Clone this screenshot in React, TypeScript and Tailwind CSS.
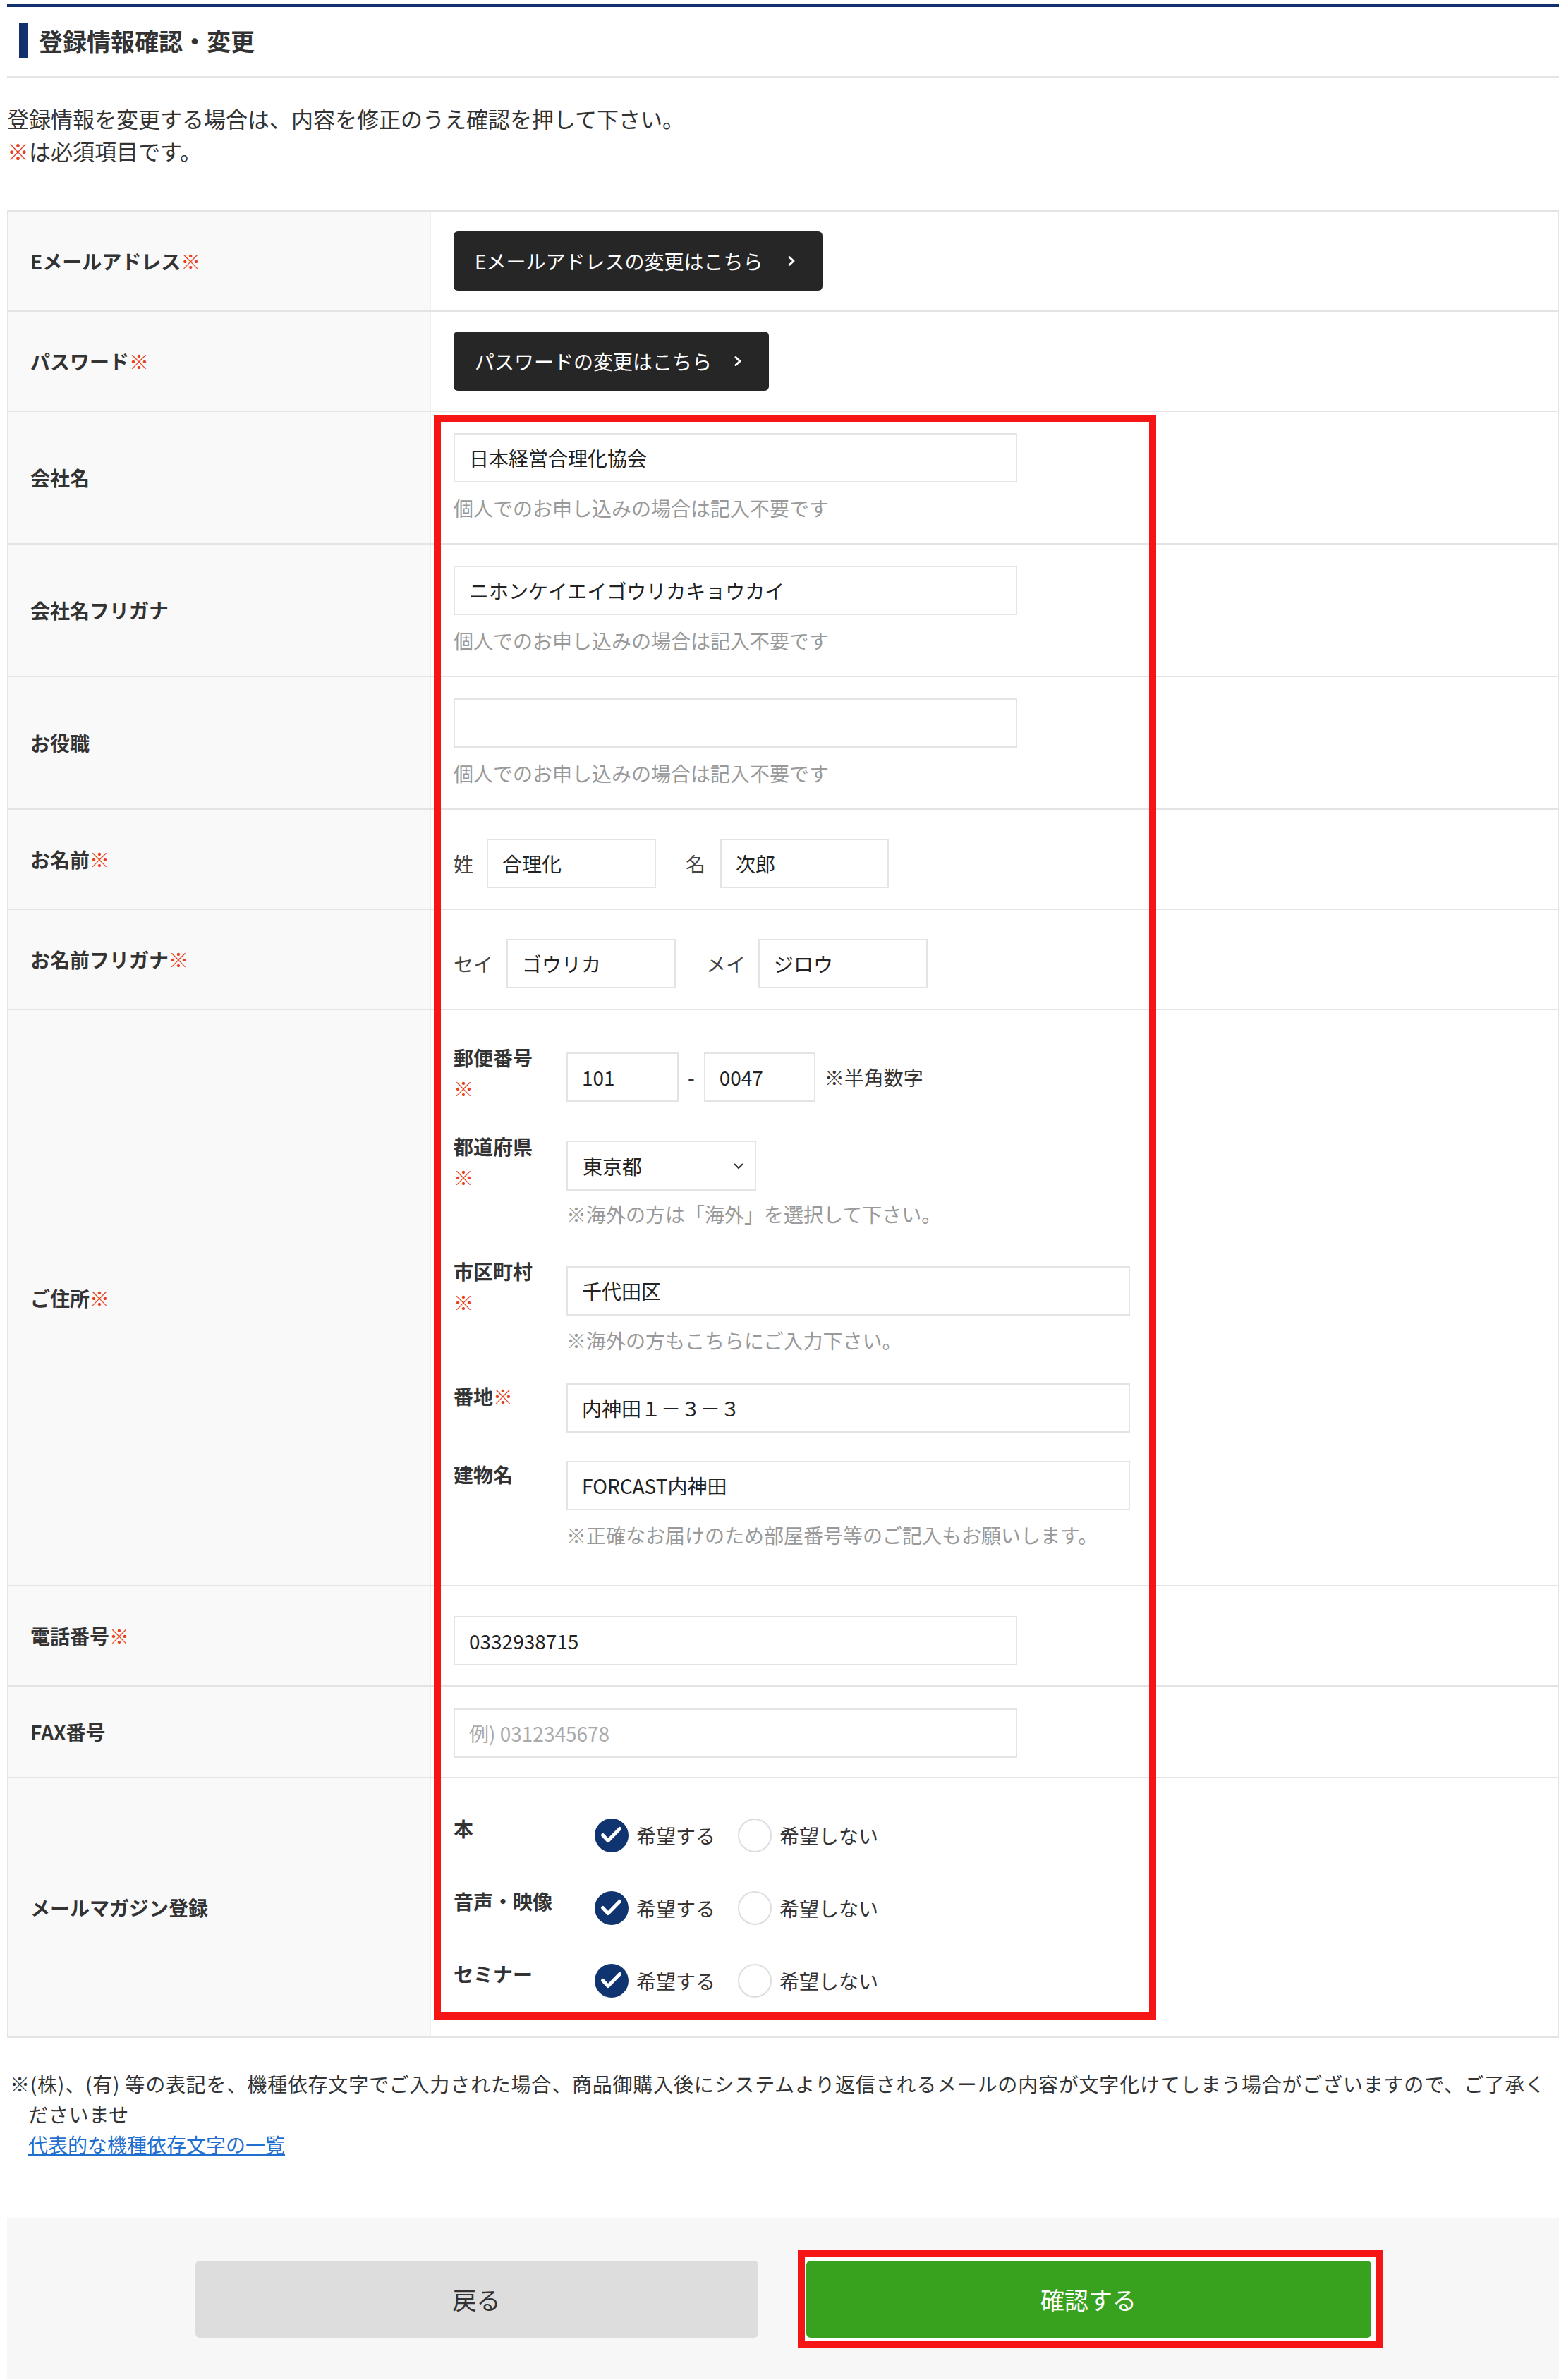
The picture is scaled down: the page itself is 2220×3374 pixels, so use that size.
import type { FC, ReactNode } from 'react'

const Req: FC = () => <span className="font-normal text-[#e8401c]">※</span>

interface RowProps {
  label: ReactNode
  cell: string
  children: ReactNode
}

const Row: FC<RowProps> = ({ label, cell, children }) => (
  <div className="grid grid-cols-[599px_1fr] border-b-2 border-[#e4e4e4]">
    <div className="flex items-center border-r-2 border-[#efefef] bg-[#f9f9f9] pl-[31px] text-[28px] font-bold text-[#333]">
      {label}
    </div>
    <div className={cell}>{children}</div>
  </div>
)

const TextBox: FC<{ value?: string; placeholder?: string; w: string }> = ({ value, placeholder, w }) => (
  <input
    readOnly
    value={value ?? ''}
    placeholder={placeholder}
    className={`${w} h-[70px] border-2 border-[#e4e4e4] bg-white px-[20px] text-[28px] text-[#222] outline-none placeholder:text-[#aaa]`}
  />
)

const Hint: FC<{ children: ReactNode; mt: string }> = ({ children, mt }) => (
  <div className={`${mt} text-[28px] leading-[44px] text-[#999]`}>{children}</div>
)

const DarkButton: FC<{ children: ReactNode; w: string }> = ({ children, w }) => (
  <button className={`${w} flex h-[84px] items-center justify-between rounded-[6px] bg-[#262626] pl-[30px] pr-[38px] text-[28px] text-white`}>
    <span>{children}</span>
    <svg width="12" height="16" viewBox="0 0 12 16">
      <path d="M3 2.5l6 5.5-6 5.5" fill="none" stroke="#fff" strokeWidth="3" strokeLinecap="round" strokeLinejoin="round" />
    </svg>
  </button>
)

const Radio: FC<{ checked?: boolean; label: string; ml?: string }> = ({ checked, label, ml = '' }) => (
  <div className={`${ml} flex items-center gap-[11px]`}>
    {checked ? (
      <svg width="48" height="48" viewBox="0 0 48 48">
        <circle cx="24" cy="24" r="24" fill="#0f3470" />
        <path d="M11.5 23.5l7.5 8L35.5 14.5" fill="none" stroke="#fff" strokeWidth="5" strokeLinecap="round" strokeLinejoin="round" />
      </svg>
    ) : (
      <span className="h-[48px] w-[48px] rounded-full border-2 border-[#dddddd] bg-white" />
    )}
    <span className="text-[28px] leading-none text-[#333]">{label}</span>
  </div>
)

const SubLabel: FC<{ children: ReactNode }> = ({ children }) => (
  <div className="w-[160px] shrink-0 text-[28px] font-bold leading-[44px] text-[#333]">{children}</div>
)

const MagRow: FC<{ label: string; mt?: string }> = ({ label, mt = '' }) => (
  <div className={`${mt} flex items-start`}>
    <div className="w-[200px] shrink-0 text-[28px] font-bold leading-[44px] text-[#333]">{label}</div>
    <div className="mt-[8px] flex items-center">
      <Radio checked label="希望する" />
      <Radio label="希望しない" ml="ml-[32px]" />
    </div>
  </div>
)

const App: FC = () => {
  return (
    <div className="min-h-[3374px] w-[2220px] bg-white px-[10px] font-['Noto_Sans_CJK_JP','Noto_Sans',sans-serif] text-[#333]">
      {/* top rule */}
      <div className="mt-[5px] h-[5px] bg-[#10316b]" />

      {/* heading */}
      <div className="mt-[22px] flex h-[50px] items-center">
        <div className="ml-[17px] h-[50px] w-[12px] bg-[#10316b]" />
        <h1 className="ml-[16px] text-[34px] font-bold text-[#333]">登録情報確認・変更</h1>
      </div>
      <div className="mt-[26px] border-t-2 border-[#e5e5e5]" />

      <div className="mt-[35px] text-[31px] leading-[46px] text-[#333]">
        <p>登録情報を変更する場合は、内容を修正のうえ確認を押して下さい。</p>
        <p>
          <Req />は必須項目です。
        </p>
      </div>

      {/* form table */}
      <div className="relative mt-[61px]">
        <div className="border-x-2 border-t-2 border-[#e4e4e4]">
          <Row label={<>Eメールアドレス<Req /></>} cell="pl-[32px] py-[28px]">
            <DarkButton w="w-[523px]">Eメールアドレスの変更はこちら</DarkButton>
          </Row>

          <Row label={<>パスワード<Req /></>} cell="pl-[32px] py-[28px]">
            <DarkButton w="w-[447px]">パスワードの変更はこちら</DarkButton>
          </Row>

          <Row label="会社名" cell="pl-[32px] pt-[30px] pb-[28px]">
            <TextBox w="w-[799px]" value="日本経営合理化協会" />
            <Hint mt="mt-[14px]">個人でのお申し込みの場合は記入不要です</Hint>
          </Row>

          <Row label="会社名フリガナ" cell="pl-[32px] pt-[30px] pb-[28px]">
            <TextBox w="w-[799px]" value="ニホンケイエイゴウリカキョウカイ" />
            <Hint mt="mt-[14px]">個人でのお申し込みの場合は記入不要です</Hint>
          </Row>

          <Row label="お役職" cell="pl-[32px] pt-[30px] pb-[28px]">
            <TextBox w="w-[799px]" />
            <Hint mt="mt-[14px]">個人でのお申し込みの場合は記入不要です</Hint>
          </Row>

          <Row label={<>お名前<Req /></>} cell="pl-[32px] pt-[41px] pb-[29px]">
            <div className="flex items-center text-[28px] text-[#444]">
              <span>姓</span>
              <span className="ml-[19px]"><TextBox w="w-[240px]" value="合理化" /></span>
              <span className="ml-[42px]">名</span>
              <span className="ml-[21px]"><TextBox w="w-[239px]" value="次郎" /></span>
            </div>
          </Row>

          <Row label={<>お名前フリガナ<Req /></>} cell="pl-[32px] pt-[41px] pb-[29px]">
            <div className="flex items-center text-[28px] text-[#444]">
              <span>セイ</span>
              <span className="ml-[19px]"><TextBox w="w-[240px]" value="ゴウリカ" /></span>
              <span className="ml-[43px]">メイ</span>
              <span className="ml-[18px]"><TextBox w="w-[240px]" value="ジロウ" /></span>
            </div>
          </Row>

          <Row label={<>ご住所<Req /></>} cell="pl-[32px] pt-[45px] pb-[49px]">
            <div className="flex items-start">
              <SubLabel>郵便番号<br /><Req /></SubLabel>
              <div className="mt-[15px] flex items-center text-[28px] text-[#333]">
                <TextBox w="w-[159px]" value="101" />
                <span className="mx-[13px]">-</span>
                <TextBox w="w-[158px]" value="0047" />
                <span className="ml-[13px]">※半角数字</span>
              </div>
            </div>

            <div className="mt-[38px] flex items-start">
              <SubLabel>都道府県<br /><Req /></SubLabel>
              <div className="mt-[14px]">
                <div className="flex h-[71px] w-[269px] items-center justify-between border-2 border-[#e4e4e4] bg-white pl-[21px] pr-[15px] text-[28px] text-[#222]">
                  <span>東京都</span>
                  <svg width="16" height="10" viewBox="0 0 16 10">
                    <path d="M2 2l6 6 6-6" fill="none" stroke="#333" strokeWidth="2" />
                  </svg>
                </div>
                <Hint mt="mt-[11px]">※海外の方は「海外」を選択して下さい。</Hint>
              </div>
            </div>

            <div className="mt-[37px] flex items-start">
              <SubLabel>市区町村<br /><Req /></SubLabel>
              <div className="mt-[15px]">
                <TextBox w="w-[799px]" value="千代田区" />
                <Hint mt="mt-[13px]">※海外の方もこちらにご入力下さい。</Hint>
              </div>
            </div>

            <div className="mt-[35px] flex items-start">
              <SubLabel>番地<Req /></SubLabel>
              <div className="mt-[4px]">
                <TextBox w="w-[799px]" value="内神田１－３－３" />
              </div>
            </div>

            <div className="mt-[37px] flex items-start">
              <SubLabel>建物名</SubLabel>
              <div className="mt-[3px]">
                <TextBox w="w-[799px]" value="FORCAST内神田" />
                <Hint mt="mt-[13px]">※正確なお届けのため部屋番号等のご記入もお願いします。</Hint>
              </div>
            </div>
          </Row>

          <Row label={<>電話番号<Req /></>} cell="pl-[32px] pt-[42px] pb-[28px]">
            <TextBox w="w-[799px]" value="0332938715" />
          </Row>

          <Row label="FAX番号" cell="pl-[32px] pt-[31px] pb-[27px]">
            <TextBox w="w-[799px]" placeholder="例) 0312345678" />
          </Row>

          <Row label="メールマガジン登録" cell="pl-[32px] pt-[49px] pb-[55px]">
            <MagRow label="本" />
            <MagRow label="音声・映像" mt="mt-[47px]" />
            <MagRow label="セミナー" mt="mt-[47px]" />
          </Row>
        </div>

        {/* annotation frame */}
        <div className="pointer-events-none absolute left-[605px] top-[290px] h-[2275px] w-[1024px] border-[10px] border-[#f51515]" />
      </div>

      {/* notes */}
      <div className="mt-[44px] text-[28px] leading-[43px] text-[#333]">
        <p className="pl-[30px] indent-[-26px] tracking-[0.8px]">
          ※(株)、(有) 等の表記を、機種依存文字でご入力された場合、商品御購入後にシステムより返信されるメールの内容が文字化けてしまう場合がございますので、ご了承く
          <br />
          ださいませ
        </p>
        <a href="#" className="block pl-[30px] text-[#1f6fd1] underline">
          代表的な機種依存文字の一覧
        </a>
      </div>

      {/* actions */}
      <div className="mt-[82px] flex justify-center gap-[68px] bg-[#f7f7f7] pb-[58px] pt-[61px]">
        <button className="h-[109px] w-[798px] rounded-[6px] bg-[#dddddd] text-[34px] text-[#333]">戻る</button>
        <div className="relative">
          <div className="absolute -bottom-[15px] -left-[12px] -right-[17px] -top-[15px] border-[10px] border-[#f51515] bg-white" />
          <button className="relative h-[109px] w-[801px] rounded-[6px] bg-[#38a21e] text-[34px] text-white">確認する</button>
        </div>
      </div>
    </div>
  )
}

export default App
